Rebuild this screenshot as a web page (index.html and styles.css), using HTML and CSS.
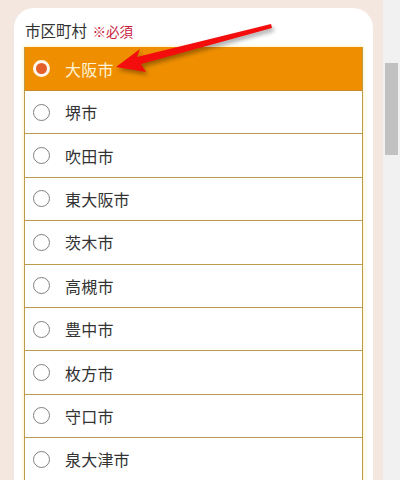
FILE: index.html
```html
<!DOCTYPE html>
<html lang="ja">
<head>
<meta charset="utf-8">
<link rel="stylesheet" href="styles.css">
</head>
<body>
<div class="page">
  <div class="main">
    <div class="card">
      <div class="label">市区町村 <span class="req">※必須</span></div>
      <ul class="list">
        <li class="item selected"><span class="radio"></span><span class="name">大阪市</span></li>
        <li class="item"><span class="radio"></span><span class="name">堺市</span></li>
        <li class="item"><span class="radio"></span><span class="name">吹田市</span></li>
        <li class="item"><span class="radio"></span><span class="name">東大阪市</span></li>
        <li class="item"><span class="radio"></span><span class="name">茨木市</span></li>
        <li class="item"><span class="radio"></span><span class="name">高槻市</span></li>
        <li class="item"><span class="radio"></span><span class="name">豊中市</span></li>
        <li class="item"><span class="radio"></span><span class="name">枚方市</span></li>
        <li class="item"><span class="radio"></span><span class="name">守口市</span></li>
        <li class="item"><span class="radio"></span><span class="name">泉大津市</span></li>
      </ul>
    </div>
  </div>
  <div class="scrollbar"><div class="thumb"></div></div>
</div>
<svg class="arrow" width="400" height="100" viewBox="0 0 400 100">
  <polygon points="116,67 140,49 137,57 271,24 272,28 141,64 146,72" fill="#f40d0d"/>
</svg>
</body>
</html>
```
FILE: styles.css
```css
html, body {
  margin: 0;
  padding: 0;
  width: 400px;
  height: 480px;
  overflow: hidden;
}
body {
  font-family: "Noto Sans CJK JP", "Noto Sans", sans-serif;
  color: #333;
  position: relative;
}
.page {
  display: flex;
  height: 480px;
}
.main {
  width: 383px;
  background: #f4e7df;
  padding: 8px 10px 0 14px;
  box-sizing: border-box;
}
.card {
  background: #fff;
  border-radius: 20px 20px 0 0;
  padding: 10px 10px 0 10px;
  height: 600px;
}
.label {
  font-size: 15.5px;
  line-height: 24px;
  margin: 0 0 4px 1px;
  color: #333;
}
.req {
  font-size: 13.5px;
  color: #c8203c;
  margin-left: 2px;
}
.list {
  list-style: none;
  margin: 0;
  padding: 0;
  border: 1px solid #bc9c4c;
  border-top: none;
  border-bottom: none;
  box-shadow: 0 0 3px 1px #fff4c8;
}
.item {
  display: flex;
  align-items: center;
  height: 42.4px;
  border-bottom: 1px solid #bc9c4c;
  font-size: 16px;
}
.item.selected {
  background: #ef8f00;
  border-bottom-color: #c98a2c;
  color: #fff3d6;
  height: 43px;
}
.radio {
  width: 17px;
  height: 17px;
  border: 1.4px solid #808080;
  border-radius: 50%;
  margin: 0 15px 0 8px;
  box-sizing: border-box;
  background: #fff;
}
.selected .radio {
  border: 3.5px solid #fff6ec;
  background: #e4602a;
}
.name {
  letter-spacing: 0.2px;
}
.scrollbar {
  width: 17px;
  background: #f1f1f1;
  padding: 63px 2px 0 2px;
  box-sizing: border-box;
}
.thumb {
  height: 92px;
  background: #c1c1c1;
}
.arrow {
  position: absolute;
  left: 0;
  top: 0;
  filter: drop-shadow(2px 3px 2px rgba(0, 0, 0, 0.35));
}
```
